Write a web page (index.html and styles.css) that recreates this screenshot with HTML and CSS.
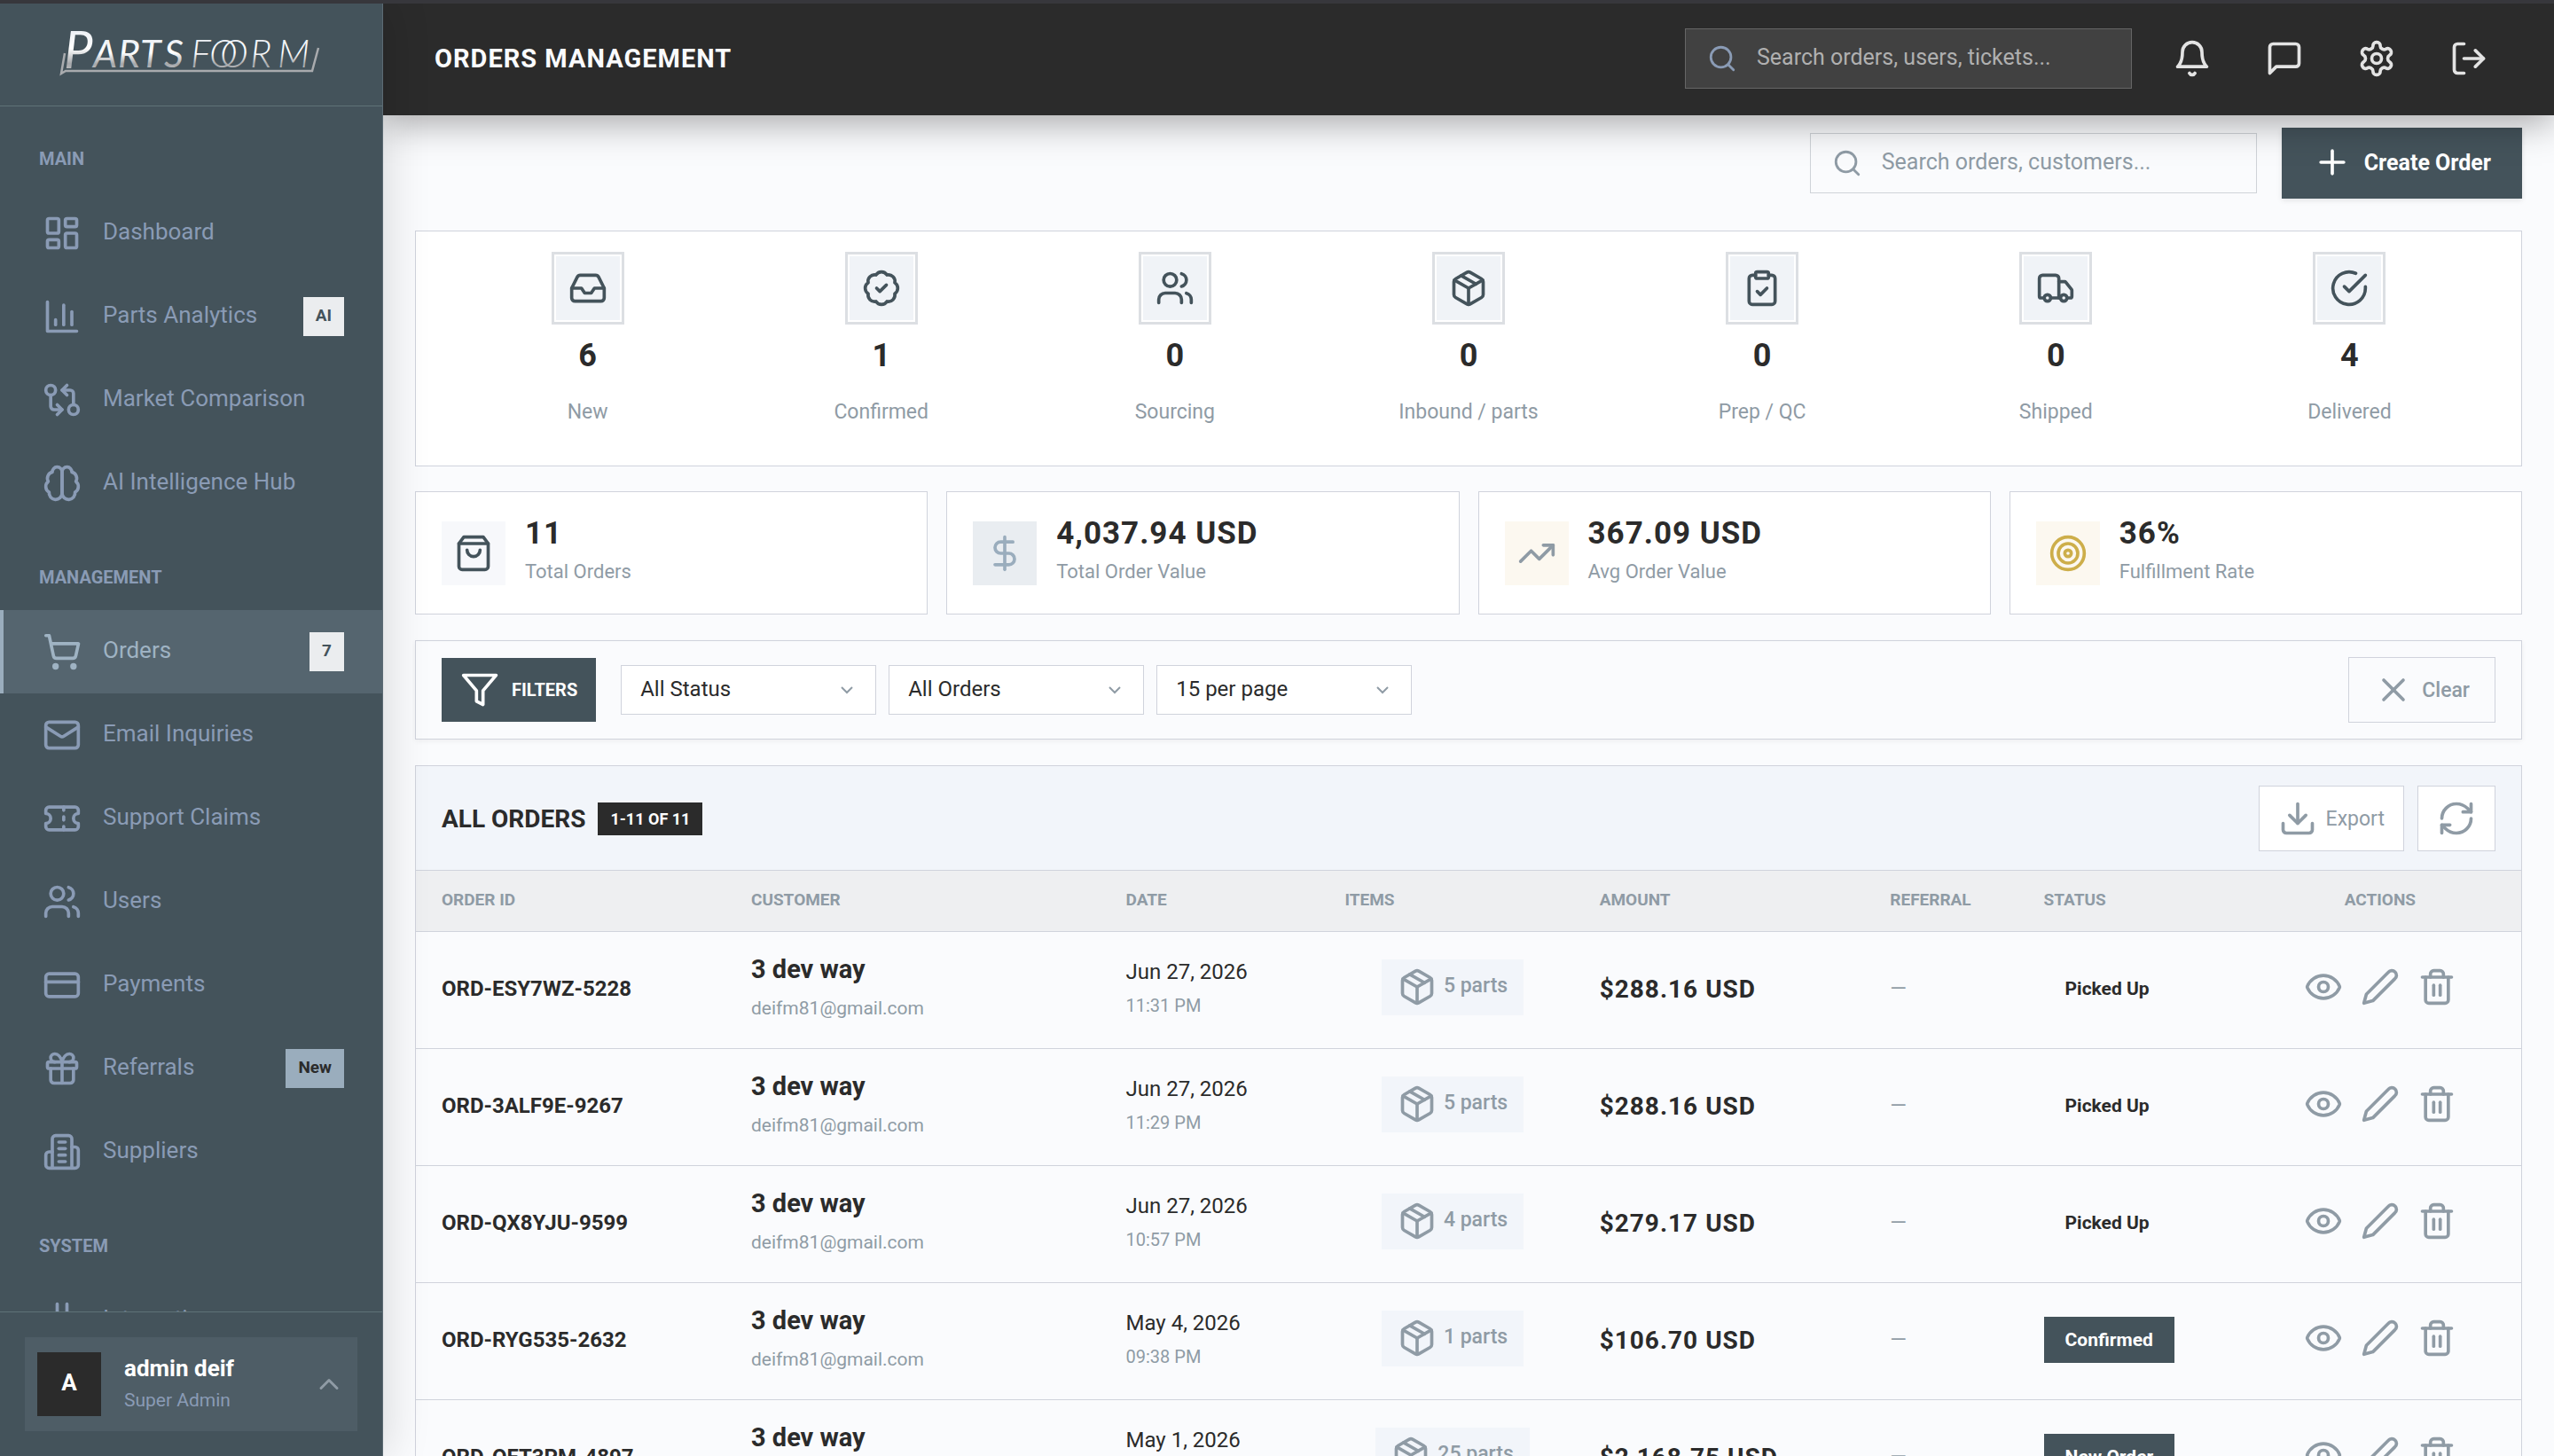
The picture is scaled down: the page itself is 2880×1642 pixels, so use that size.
FILE: index.html
```html
<!DOCTYPE html>
<html lang="en">
<head>
  <meta charset="UTF-8">
  <meta name="viewport" content="width=device-width, initial-scale=1.0">
  <title>Orders Management - PartsForm Admin</title>
  <link rel="stylesheet" href="styles.css">
</head>
<body>

  <!-- Icon sprite -->
  <svg class="sprite" aria-hidden="true">
    <symbol id="i-dashboard" viewBox="0 0 24 24"><rect x="3" y="3" width="7" height="9" rx="1"/><rect x="14" y="3" width="7" height="5" rx="1"/><rect x="14" y="12" width="7" height="9" rx="1"/><rect x="3" y="16" width="7" height="5" rx="1"/></symbol>
    <symbol id="i-chart" viewBox="0 0 24 24"><path d="M3 3v18h18"/><path d="M18 17V9"/><path d="M13 17V5"/><path d="M8 17v-3"/></symbol>
    <symbol id="i-compare" viewBox="0 0 24 24"><circle cx="5" cy="6" r="3"/><path d="M12 6h5a2 2 0 0 1 2 2v7"/><path d="m15 9-3-3 3-3"/><circle cx="19" cy="18" r="3"/><path d="M12 18H7a2 2 0 0 1-2-2V9"/><path d="m9 15 3 3-3 3"/></symbol>
    <symbol id="i-brain" viewBox="0 0 24 24"><path d="M12 5a3 3 0 1 0-5.997.125 4 4 0 0 0-2.526 5.77 4 4 0 0 0 .556 6.588A4 4 0 1 0 12 18Z"/><path d="M12 5a3 3 0 1 1 5.997.125 4 4 0 0 1 2.526 5.77 4 4 0 0 1-.556 6.588A4 4 0 1 1 12 18Z"/></symbol>
    <symbol id="i-cart" viewBox="0 0 24 24"><circle cx="8" cy="21" r="1"/><circle cx="19" cy="21" r="1"/><path d="M2.05 2.05h2l2.66 12.42a2 2 0 0 0 2 1.58h9.78a2 2 0 0 0 1.95-1.57l1.65-7.43H5.12"/></symbol>
    <symbol id="i-mail" viewBox="0 0 24 24"><rect x="2" y="4" width="20" height="16" rx="2"/><path d="m22 7-8.97 5.7a1.94 1.94 0 0 1-2.06 0L2 7"/></symbol>
    <symbol id="i-ticket" viewBox="0 0 24 24"><path d="M2 9a3 3 0 0 1 0 6v2a2 2 0 0 0 2 2h16a2 2 0 0 0 2-2v-2a3 3 0 0 1 0-6V7a2 2 0 0 0-2-2H4a2 2 0 0 0-2 2Z"/><path d="M13 5v2"/><path d="M13 17v2"/><path d="M13 11v2"/></symbol>
    <symbol id="i-users" viewBox="0 0 24 24"><path d="M16 21v-2a4 4 0 0 0-4-4H6a4 4 0 0 0-4 4v2"/><circle cx="9" cy="7" r="4"/><path d="M22 21v-2a4 4 0 0 0-3-3.87"/><path d="M16 3.13a4 4 0 0 1 0 7.75"/></symbol>
    <symbol id="i-card" viewBox="0 0 24 24"><rect x="2" y="5" width="20" height="14" rx="2"/><path d="M2 10h20"/></symbol>
    <symbol id="i-gift" viewBox="0 0 24 24"><rect x="3" y="8" width="18" height="4" rx="1"/><path d="M12 8v13"/><path d="M19 12v7a2 2 0 0 1-2 2H7a2 2 0 0 1-2-2v-7"/><path d="M7.5 8a2.5 2.5 0 0 1 0-5A4.8 8 0 0 1 12 8a4.8 8 0 0 1 4.5-5 2.5 2.5 0 0 1 0 5"/></symbol>
    <symbol id="i-building" viewBox="0 0 24 24"><path d="M6 22V4a2 2 0 0 1 2-2h8a2 2 0 0 1 2 2v18Z"/><path d="M6 12H4a2 2 0 0 0-2 2v6a2 2 0 0 0 2 2h2"/><path d="M18 9h2a2 2 0 0 1 2 2v9a2 2 0 0 1-2 2h-2"/><path d="M10 6h4"/><path d="M10 10h4"/><path d="M10 14h4"/><path d="M10 18h4"/></symbol>
    <symbol id="i-plug" viewBox="0 0 24 24"><path d="M12 22v-5"/><path d="M9 8V2"/><path d="M15 8V2"/><path d="M18 8v5a4 4 0 0 1-4 4h-4a4 4 0 0 1-4-4V8Z"/></symbol>
    <symbol id="i-up" viewBox="0 0 24 24"><path d="m18 15-6-6-6 6"/></symbol>
    <symbol id="i-search" viewBox="0 0 24 24"><circle cx="11" cy="11" r="8"/><path d="m21 21-4.3-4.3"/></symbol>
    <symbol id="i-bell" viewBox="0 0 24 24"><path d="M6 8a6 6 0 0 1 12 0c0 7 3 9 3 9H3s3-2 3-9"/><path d="M10.3 21a1.94 1.94 0 0 0 3.4 0"/></symbol>
    <symbol id="i-message" viewBox="0 0 24 24"><path d="M21 15a2 2 0 0 1-2 2H7l-4 4V5a2 2 0 0 1 2-2h14a2 2 0 0 1 2 2z"/></symbol>
    <symbol id="i-settings" viewBox="0 0 24 24"><path d="M12.22 2h-.44a2 2 0 0 0-2 2v.18a2 2 0 0 1-1 1.73l-.43.25a2 2 0 0 1-2 0l-.15-.08a2 2 0 0 0-2.73.73l-.22.38a2 2 0 0 0 .73 2.73l.15.1a2 2 0 0 1 1 1.72v.51a2 2 0 0 1-1 1.74l-.15.09a2 2 0 0 0-.73 2.73l.22.38a2 2 0 0 0 2.73.73l.15-.08a2 2 0 0 1 2 0l.43.25a2 2 0 0 1 1 1.73V20a2 2 0 0 0 2 2h.44a2 2 0 0 0 2-2v-.18a2 2 0 0 1 1-1.73l.43-.25a2 2 0 0 1 2 0l.15.08a2 2 0 0 0 2.73-.73l.22-.39a2 2 0 0 0-.73-2.73l-.15-.08a2 2 0 0 1-1-1.74v-.5a2 2 0 0 1 1-1.74l.15-.09a2 2 0 0 0 .73-2.73l-.22-.38a2 2 0 0 0-2.73-.73l-.15.08a2 2 0 0 1-2 0l-.43-.25a2 2 0 0 1-1-1.73V4a2 2 0 0 0-2-2z"/><circle cx="12" cy="12" r="3"/></symbol>
    <symbol id="i-logout" viewBox="0 0 24 24"><path d="M9 21H5a2 2 0 0 1-2-2V5a2 2 0 0 1 2-2h4"/><path d="m16 17 5-5-5-5"/><path d="M21 12H9"/></symbol>
    <symbol id="i-plus" viewBox="0 0 24 24"><path d="M5 12h14"/><path d="M12 5v14"/></symbol>
    <symbol id="i-inbox" viewBox="0 0 24 24"><path d="M22 12h-6l-2 3h-4l-2-3H2"/><path d="M5.45 5.11 2 12v6a2 2 0 0 0 2 2h16a2 2 0 0 0 2-2v-6l-3.45-6.89A2 2 0 0 0 16.76 4H7.24a2 2 0 0 0-1.79 1.11z"/></symbol>
    <symbol id="i-badge" viewBox="0 0 24 24"><path d="M3.85 8.62a4 4 0 0 1 4.78-4.77 4 4 0 0 1 6.74 0 4 4 0 0 1 4.78 4.78 4 4 0 0 1 0 6.74 4 4 0 0 1-4.77 4.78 4 4 0 0 1-6.75 0 4 4 0 0 1-4.78-4.77 4 4 0 0 1 0-6.76Z"/><path d="m9 12 2 2 4-4"/></symbol>
    <symbol id="i-package" viewBox="0 0 24 24"><path d="m7.5 4.27 9 5.15"/><path d="M21 8a2 2 0 0 0-1-1.73l-7-4a2 2 0 0 0-2 0l-7 4A2 2 0 0 0 3 8v8a2 2 0 0 0 1 1.73l7 4a2 2 0 0 0 2 0l7-4A2 2 0 0 0 21 16Z"/><path d="m3.3 7 8.7 5 8.7-5"/><path d="M12 22V12"/></symbol>
    <symbol id="i-clipboard" viewBox="0 0 24 24"><rect x="8" y="2" width="8" height="4" rx="1"/><path d="M16 4h2a2 2 0 0 1 2 2v14a2 2 0 0 1-2 2H6a2 2 0 0 1-2-2V6a2 2 0 0 1 2-2h2"/><path d="m9 14 2 2 4-4"/></symbol>
    <symbol id="i-truck" viewBox="0 0 24 24"><path d="M14 18V6a2 2 0 0 0-2-2H4a2 2 0 0 0-2 2v11a1 1 0 0 0 1 1h2"/><path d="M15 18H9"/><path d="M19 18h2a1 1 0 0 0 1-1v-3.65a1 1 0 0 0-.22-.62l-3.48-4.35A1 1 0 0 0 17.52 8H14"/><circle cx="17" cy="18" r="2"/><circle cx="7" cy="18" r="2"/></symbol>
    <symbol id="i-check" viewBox="0 0 24 24"><path d="M22 11.08V12a10 10 0 1 1-5.93-9.14"/><path d="m9 11 3 3L22 4"/></symbol>
    <symbol id="i-bag" viewBox="0 0 24 24"><path d="M6 2 3 6v14a2 2 0 0 0 2 2h14a2 2 0 0 0 2-2V6l-3-4Z"/><path d="M3 6h18"/><path d="M16 10a4 4 0 0 1-8 0"/></symbol>
    <symbol id="i-dollar" viewBox="0 0 24 24"><path d="M12 2v20"/><path d="M17 5H9.5a3.5 3.5 0 0 0 0 7h5a3.5 3.5 0 0 1 0 7H6"/></symbol>
    <symbol id="i-trend" viewBox="0 0 24 24"><path d="m22 7-8.5 8.5-5-5L2 17"/><path d="M16 7h6v6"/></symbol>
    <symbol id="i-target" viewBox="0 0 24 24"><circle cx="12" cy="12" r="10"/><circle cx="12" cy="12" r="6"/><circle cx="12" cy="12" r="2"/></symbol>
    <symbol id="i-filter" viewBox="0 0 24 24"><path d="M22 3H2l8 9.46V19l4 2v-8.54L22 3z"/></symbol>
    <symbol id="i-x" viewBox="0 0 24 24"><path d="M18 6 6 18"/><path d="m6 6 12 12"/></symbol>
    <symbol id="i-download" viewBox="0 0 24 24"><path d="M21 15v4a2 2 0 0 1-2 2H5a2 2 0 0 1-2-2v-4"/><path d="m7 10 5 5 5-5"/><path d="M12 15V3"/></symbol>
    <symbol id="i-refresh" viewBox="0 0 24 24"><path d="M3 12a9 9 0 0 1 9-9 9.75 9.75 0 0 1 6.74 2.74L21 8"/><path d="M21 3v5h-5"/><path d="M21 12a9 9 0 0 1-9 9 9.75 9.75 0 0 1-6.74-2.74L3 16"/><path d="M8 16H3v5"/></symbol>
    <symbol id="i-eye" viewBox="0 0 24 24"><path d="M2.06 12.35a1 1 0 0 1 0-.7 10.75 10.75 0 0 1 19.88 0 1 1 0 0 1 0 .7 10.75 10.75 0 0 1-19.88 0"/><circle cx="12" cy="12" r="3"/></symbol>
    <symbol id="i-pencil" viewBox="0 0 24 24"><path d="M17 3a2.85 2.83 0 1 1 4 4L7.5 20.5 2 22l1.5-5.5Z"/></symbol>
    <symbol id="i-trash" viewBox="0 0 24 24"><path d="M3 6h18"/><path d="M19 6v14a2 2 0 0 1-2 2H7a2 2 0 0 1-2-2V6"/><path d="M8 6V4a2 2 0 0 1 2-2h4a2 2 0 0 1 2 2v2"/><path d="M10 11v6"/><path d="M14 11v6"/></symbol>
  </svg>

  <aside class="sidebar">
    <div class="sidebar-header">
      <svg class="logo" viewBox="0 0 300 60" role="img" aria-label="PartsForm">
        <defs>
          <linearGradient id="chrome" x1="0" y1="0" x2="0" y2="1">
            <stop offset="0" stop-color="#dfe6ee"/>
            <stop offset="0.5" stop-color="#ffffff"/>
            <stop offset="0.75" stop-color="#a5a7aa"/>
            <stop offset="1" stop-color="#d8d8d8"/>
          </linearGradient>
        </defs>
        <g class="logo-text" fill="url(#chrome)">
          <text class="logo-cap" x="6" y="47">P</text>
          <text x="39 67 92 119" y="46">ARTS</text>
          <text class="logo-thin" x="149 170 182" y="46">FOO</text>
          <text class="logo-thin" x="216 247" y="46">RM</text>
        </g>
        <path d="M7 30 3 53 8 50H286L293 24" fill="none" stroke="#a9abae" stroke-width="2.5"/>
      </svg>
    </div>

    <nav class="sidebar-nav">
      <h2 class="nav-title">Main</h2>
      <a href="#" class="nav-item"><svg class="icon"><use href="#i-dashboard"/></svg><span class="nav-label">Dashboard</span></a>
      <a href="#" class="nav-item"><svg class="icon"><use href="#i-chart"/></svg><span class="nav-label">Parts Analytics</span><span class="nav-badge">AI</span></a>
      <a href="#" class="nav-item"><svg class="icon"><use href="#i-compare"/></svg><span class="nav-label">Market Comparison</span></a>
      <a href="#" class="nav-item"><svg class="icon"><use href="#i-brain"/></svg><span class="nav-label">AI Intelligence Hub</span></a>

      <h2 class="nav-title">Management</h2>
      <a href="#" class="nav-item active"><svg class="icon"><use href="#i-cart"/></svg><span class="nav-label">Orders</span><span class="nav-badge">7</span></a>
      <a href="#" class="nav-item"><svg class="icon"><use href="#i-mail"/></svg><span class="nav-label">Email Inquiries</span></a>
      <a href="#" class="nav-item"><svg class="icon"><use href="#i-ticket"/></svg><span class="nav-label">Support Claims</span></a>
      <a href="#" class="nav-item"><svg class="icon"><use href="#i-users"/></svg><span class="nav-label">Users</span></a>
      <a href="#" class="nav-item"><svg class="icon"><use href="#i-card"/></svg><span class="nav-label">Payments</span></a>
      <a href="#" class="nav-item"><svg class="icon"><use href="#i-gift"/></svg><span class="nav-label">Referrals</span><span class="nav-badge new">New</span></a>
      <a href="#" class="nav-item"><svg class="icon"><use href="#i-building"/></svg><span class="nav-label">Suppliers</span></a>

      <h2 class="nav-title">System</h2>
      <a href="#" class="nav-item"><svg class="icon"><use href="#i-plug"/></svg><span class="nav-label">Integrations</span></a>
    </nav>

    <div class="sidebar-footer">
      <button class="user-card" type="button">
        <span class="avatar">A</span>
        <span class="user-info">
          <span class="user-name">admin deif</span>
          <span class="user-role">Super Admin</span>
        </span>
        <svg class="icon user-arrow"><use href="#i-up"/></svg>
      </button>
    </div>
  </aside>

  <div class="main">
    <header class="header">
      <h1>Orders Management</h1>
      <div class="header-actions">
        <label class="search header-search">
          <svg class="icon"><use href="#i-search"/></svg>
          <input type="text" placeholder="Search orders, users, tickets..." aria-label="Search orders, users, tickets">
        </label>
        <button class="header-btn" aria-label="Notifications"><svg class="icon"><use href="#i-bell"/></svg></button>
        <button class="header-btn" aria-label="Messages"><svg class="icon"><use href="#i-message"/></svg></button>
        <button class="header-btn" aria-label="Settings"><svg class="icon"><use href="#i-settings"/></svg></button>
        <button class="header-btn" aria-label="Log out"><svg class="icon"><use href="#i-logout"/></svg></button>
      </div>
    </header>

    <main class="content">
      <div class="toolbar">
        <label class="search">
          <svg class="icon"><use href="#i-search"/></svg>
          <input type="text" placeholder="Search orders, customers..." aria-label="Search orders, customers">
        </label>
        <button class="create-btn"><svg class="icon"><use href="#i-plus"/></svg>Create Order</button>
      </div>

      <!-- Order pipeline -->
      <section class="pipeline">
        <div class="stage"><span class="stage-icon"><svg class="icon"><use href="#i-inbox"/></svg></span><strong>6</strong><span class="stage-label">New</span></div>
        <div class="stage"><span class="stage-icon"><svg class="icon"><use href="#i-badge"/></svg></span><strong>1</strong><span class="stage-label">Confirmed</span></div>
        <div class="stage"><span class="stage-icon"><svg class="icon"><use href="#i-users"/></svg></span><strong>0</strong><span class="stage-label">Sourcing</span></div>
        <div class="stage"><span class="stage-icon"><svg class="icon"><use href="#i-package"/></svg></span><strong>0</strong><span class="stage-label">Inbound / parts</span></div>
        <div class="stage"><span class="stage-icon"><svg class="icon"><use href="#i-clipboard"/></svg></span><strong>0</strong><span class="stage-label">Prep / QC</span></div>
        <div class="stage"><span class="stage-icon"><svg class="icon"><use href="#i-truck"/></svg></span><strong>0</strong><span class="stage-label">Shipped</span></div>
        <div class="stage"><span class="stage-icon"><svg class="icon"><use href="#i-check"/></svg></span><strong>4</strong><span class="stage-label">Delivered</span></div>
      </section>

      <!-- Stats -->
      <section class="stats">
        <div class="stat">
          <span class="stat-icon total"><svg class="icon"><use href="#i-bag"/></svg></span>
          <div><div class="stat-value">11</div><div class="stat-label">Total Orders</div></div>
        </div>
        <div class="stat">
          <span class="stat-icon value"><svg class="icon"><use href="#i-dollar"/></svg></span>
          <div><div class="stat-value">4,037.94 USD</div><div class="stat-label">Total Order Value</div></div>
        </div>
        <div class="stat">
          <span class="stat-icon avg"><svg class="icon"><use href="#i-trend"/></svg></span>
          <div><div class="stat-value">367.09 USD</div><div class="stat-label">Avg Order Value</div></div>
        </div>
        <div class="stat">
          <span class="stat-icon rate"><svg class="icon"><use href="#i-target"/></svg></span>
          <div><div class="stat-value">36%</div><div class="stat-label">Fulfillment Rate</div></div>
        </div>
      </section>

      <!-- Filters -->
      <section class="filters">
        <button class="filter-btn"><svg class="icon"><use href="#i-filter"/></svg>Filters</button>
        <div class="selects">
          <select aria-label="Status"><option>All Status</option></select>
          <select aria-label="Orders"><option>All Orders</option></select>
          <select aria-label="Page size"><option>15 per page</option></select>
        </div>
        <button class="clear-btn"><svg class="icon"><use href="#i-x"/></svg>Clear</button>
      </section>

      <!-- Orders table -->
      <section class="orders">
        <div class="orders-header">
          <h2>All Orders</h2>
          <span class="count-badge">1-11 of 11</span>
          <div class="orders-actions">
            <button class="tool-btn"><svg class="icon"><use href="#i-download"/></svg>Export</button>
            <button class="tool-btn" aria-label="Refresh"><svg class="icon"><use href="#i-refresh"/></svg></button>
          </div>
        </div>
        <table>
          <colgroup>
            <col class="c-id"><col class="c-customer"><col class="c-date"><col class="c-items"><col class="c-amount"><col class="c-referral"><col class="c-status"><col class="c-actions">
          </colgroup>
          <thead>
            <tr><th>Order ID</th><th>Customer</th><th>Date</th><th>Items</th><th>Amount</th><th>Referral</th><th>Status</th><th class="center">Actions</th></tr>
          </thead>
          <tbody>
            <tr>
              <td class="order-id">ORD-ESY7WZ-5228</td>
              <td><div class="name">3 dev way</div><div class="email">deifm81@gmail.com</div></td>
              <td><div class="date">Jun 27, 2026</div><div class="time">11:31 PM</div></td>
              <td class="items"><span class="parts"><svg class="icon"><use href="#i-package"/></svg><span>5 parts</span></span></td>
              <td class="amount">$288.16 USD</td>
              <td class="referral">—</td>
              <td><span class="status">Picked Up</span></td>
              <td class="actions"><button aria-label="View"><svg class="icon"><use href="#i-eye"/></svg></button><button aria-label="Edit"><svg class="icon"><use href="#i-pencil"/></svg></button><button aria-label="Delete"><svg class="icon"><use href="#i-trash"/></svg></button></td>
            </tr>
            <tr>
              <td class="order-id">ORD-3ALF9E-9267</td>
              <td><div class="name">3 dev way</div><div class="email">deifm81@gmail.com</div></td>
              <td><div class="date">Jun 27, 2026</div><div class="time">11:29 PM</div></td>
              <td class="items"><span class="parts"><svg class="icon"><use href="#i-package"/></svg><span>5 parts</span></span></td>
              <td class="amount">$288.16 USD</td>
              <td class="referral">—</td>
              <td><span class="status">Picked Up</span></td>
              <td class="actions"><button aria-label="View"><svg class="icon"><use href="#i-eye"/></svg></button><button aria-label="Edit"><svg class="icon"><use href="#i-pencil"/></svg></button><button aria-label="Delete"><svg class="icon"><use href="#i-trash"/></svg></button></td>
            </tr>
            <tr>
              <td class="order-id">ORD-QX8YJU-9599</td>
              <td><div class="name">3 dev way</div><div class="email">deifm81@gmail.com</div></td>
              <td><div class="date">Jun 27, 2026</div><div class="time">10:57 PM</div></td>
              <td class="items"><span class="parts"><svg class="icon"><use href="#i-package"/></svg><span>4 parts</span></span></td>
              <td class="amount">$279.17 USD</td>
              <td class="referral">—</td>
              <td><span class="status">Picked Up</span></td>
              <td class="actions"><button aria-label="View"><svg class="icon"><use href="#i-eye"/></svg></button><button aria-label="Edit"><svg class="icon"><use href="#i-pencil"/></svg></button><button aria-label="Delete"><svg class="icon"><use href="#i-trash"/></svg></button></td>
            </tr>
            <tr>
              <td class="order-id">ORD-RYG535-2632</td>
              <td><div class="name">3 dev way</div><div class="email">deifm81@gmail.com</div></td>
              <td><div class="date">May 4, 2026</div><div class="time">09:38 PM</div></td>
              <td class="items"><span class="parts"><svg class="icon"><use href="#i-package"/></svg><span>1 parts</span></span></td>
              <td class="amount">$106.70 USD</td>
              <td class="referral">—</td>
              <td><span class="status filled">Confirmed</span></td>
              <td class="actions"><button aria-label="View"><svg class="icon"><use href="#i-eye"/></svg></button><button aria-label="Edit"><svg class="icon"><use href="#i-pencil"/></svg></button><button aria-label="Delete"><svg class="icon"><use href="#i-trash"/></svg></button></td>
            </tr>
            <tr>
              <td class="order-id">ORD-QFT3PM-4897</td>
              <td><div class="name">3 dev way</div><div class="email">deifm81@gmail.com</div></td>
              <td><div class="date">May 1, 2026</div><div class="time">08:12 PM</div></td>
              <td class="items"><span class="parts"><svg class="icon"><use href="#i-package"/></svg><span>25 parts</span></span></td>
              <td class="amount">$2,168.75 USD</td>
              <td class="referral">—</td>
              <td><span class="status filled">New Order</span></td>
              <td class="actions"><button aria-label="View"><svg class="icon"><use href="#i-eye"/></svg></button><button aria-label="Edit"><svg class="icon"><use href="#i-pencil"/></svg></button><button aria-label="Delete"><svg class="icon"><use href="#i-trash"/></svg></button></td>
            </tr>
          </tbody>
        </table>
      </section>
    </main>
  </div>

</body>
</html>
```
FILE: styles.css
```css
:root {
  --slate: #44535b;
  --dark: #2b2b2b;
  --blue: #9aadbd;
  --nav: #8a9bb5;
  --muted: #8f9ba5;
  --line: #d0d3dc;
  --bg: #fafbfd;
}

* {
  box-sizing: border-box;
}

body {
  margin: 0;
  height: 100vh;
  display: flex;
  overflow: hidden;
  border-top: 4px solid #37373c;
  background: var(--bg);
  color: var(--dark);
  font-family: Roboto, "Liberation Sans", sans-serif;
  font-size: 26px;
}

button, input, select {
  font-family: inherit;
  color: inherit;
  margin: 0;
  border-radius: 0;
}

button {
  border: none;
  background: none;
  padding: 0;
  cursor: pointer;
}

h1, h2 {
  margin: 0;
}

.sprite {
  display: none;
}

.icon {
  width: 44px;
  height: 44px;
  flex-shrink: 0;
  display: block;
  fill: none;
  stroke: currentColor;
  stroke-width: 2;
  stroke-linecap: round;
  stroke-linejoin: round;
}

/* Sidebar */
.sidebar {
  width: 432px;
  flex-shrink: 0;
  display: flex;
  flex-direction: column;
  background: var(--slate);
  border-right: 1px solid #5c6b74;
  box-shadow: 4px 0 48px rgba(0, 0, 0, 0.14);
  position: relative;
  z-index: 3;
}

.sidebar-header {
  height: 116px;
  flex-shrink: 0;
  display: flex;
  justify-content: center;
  padding-top: 26px;
  border-bottom: 1px solid #5f7377;
}

.logo {
  width: 300px;
  height: 60px;
  overflow: visible;
}

.logo-text {
  font-family: Lato, "Open Sans", sans-serif;
  font-style: italic;
  font-size: 43px;
}

.logo-cap {
  font-size: 58px;
}

.logo-thin {
  font-weight: 300;
}

.sidebar-nav {
  flex: 1;
  min-height: 0;
  overflow: hidden;
}

.nav-title {
  height: 96px;
  padding: 45px 44px 0;
  font-size: 20px;
  line-height: 28px;
  font-weight: 700;
  text-transform: uppercase;
  color: var(--nav);
}

.nav-item {
  height: 94px;
  display: flex;
  align-items: center;
  gap: 24px;
  padding: 0 43px 0 44px;
  border-left: 4px solid transparent;
  color: var(--nav);
  text-decoration: none;
}

.nav-item.active {
  background: #55656f;
  border-left-color: var(--blue);
  color: #9fb3c3;
}

.nav-label {
  flex: 1;
  padding-bottom: 4px;
}

.nav-badge {
  height: 44px;
  padding: 0 14px;
  font-size: 19px;
  font-weight: 700;
  line-height: 42px;
  background: #ebedef;
  color: var(--slate);
}

.nav-badge.new {
  background: var(--blue);
  color: var(--dark);
}

.sidebar-footer {
  padding: 28px;
  border-top: 1px solid #5f7377;
}

.user-card {
  width: 100%;
  height: 106px;
  display: flex;
  align-items: center;
  gap: 26px;
  padding: 0 14px;
  background: #4e5d66;
  text-align: left;
}

.avatar {
  width: 72px;
  height: 72px;
  font-size: 26px;
  font-weight: 700;
  line-height: 68px;
  text-align: center;
  background: var(--dark);
  color: #fff;
}

.user-info {
  flex: 1;
}

.user-name, .user-role {
  display: block;
  line-height: 36px;
}

.user-name {
  font-size: 26px;
  font-weight: 700;
  color: #fff;
}

.user-role {
  font-size: 21px;
  color: var(--nav);
}

.user-arrow {
  width: 36px;
  height: 36px;
  color: var(--muted);
}

/* Header */
.main {
  flex: 1;
  min-width: 0;
}

.header {
  height: 126px;
  display: flex;
  align-items: center;
  justify-content: space-between;
  padding: 0 52px 2px 58px;
  background: var(--dark);
  box-shadow: 0 8px 40px rgba(0, 0, 0, 0.35);
  position: relative;
  z-index: 2;
}

.header h1 {
  font-size: 29px;
  font-weight: 700;
  letter-spacing: 1px;
  text-transform: uppercase;
  color: #fafbfd;
}

.header-actions {
  display: flex;
  align-items: center;
  gap: 16px;
}

.search {
  width: 504px;
  height: 68px;
  display: flex;
  align-items: center;
  gap: 22px;
  padding: 0 24px;
  border: 1px solid #cfd3d8;
  color: var(--muted);
}

.search .icon {
  width: 34px;
  height: 34px;
}

.search input {
  flex: 1;
  min-width: 0;
  padding: 0 0 4px;
  border: none;
  outline: none;
  background: none;
  font-size: 25px;
}

.search input::placeholder {
  color: inherit;
  opacity: 1;
}

.header-search {
  margin-right: 8px;
  background: #414141;
  border-color: #666;
  color: var(--nav);
}

.header-search input {
  color: #b0b0b0;
}

.header-btn {
  width: 88px;
  height: 88px;
  display: flex;
  align-items: center;
  justify-content: center;
  color: #e3e3e3;
}

/* Content */
.content {
  padding: 14px 36px 36px;
}

.toolbar {
  display: flex;
  align-items: center;
  justify-content: flex-end;
  gap: 28px;
  margin-bottom: 36px;
}

.create-btn {
  height: 80px;
  display: flex;
  align-items: center;
  gap: 14px;
  padding: 0 35px 2px;
  font-size: 25px;
  font-weight: 700;
  background: var(--slate);
  color: #fff;
  box-shadow: 0 2px 6px rgba(0, 0, 0, 0.1);
}

.pipeline {
  display: grid;
  grid-template-columns: repeat(7, 1fr);
  padding: 28px 28px 44px;
  margin-bottom: 28px;
  background: #fff;
  border: 1px solid var(--line);
}

.stage {
  display: flex;
  flex-direction: column;
  align-items: center;
}

.stage-icon {
  width: 72px;
  height: 72px;
  display: flex;
  align-items: center;
  justify-content: center;
  background: #f0f3f7;
  color: var(--slate);
  box-shadow: 0 0 0 2px #fff, 0 0 0 5px #dcdfe3;
}

.stage strong {
  margin-top: 18px;
  font-size: 36px;
  line-height: 44px;
}

.stage-label {
  margin-top: 26px;
  font-size: 23px;
  line-height: 32px;
  color: var(--muted);
}

.stats {
  display: grid;
  grid-template-columns: repeat(4, 1fr);
  gap: 21px;
  margin-bottom: 29px;
}

.stat {
  height: 139px;
  display: flex;
  align-items: center;
  gap: 22px;
  padding: 0 29px;
  background: #fff;
  border: 1px solid var(--line);
}

.stat-icon {
  width: 72px;
  height: 72px;
  display: flex;
  align-items: center;
  justify-content: center;
}

.stat-icon.total {
  background: #f7f8fb;
  color: var(--slate);
}

.stat-icon.value {
  background: #e9edf1;
  color: var(--blue);
}

.stat-icon.avg {
  background: #fcf8f0;
  color: var(--muted);
}

.stat-icon.rate {
  background: #fcf8f0;
  color: #cdae4a;
}

.stat-value {
  margin-bottom: 2px;
  font-size: 35px;
  font-weight: 700;
  letter-spacing: 1px;
  line-height: 40px;
}

.stat-label {
  font-size: 22px;
  line-height: 42px;
  color: var(--muted);
}

/* Filters */
.filters {
  height: 112px;
  display: flex;
  align-items: center;
  gap: 28px;
  padding: 0 29px;
  margin-bottom: 29px;
  border: 1px solid var(--line);
  box-shadow: 0 2px 6px rgba(0, 0, 0, 0.05);
}

.filter-btn {
  height: 72px;
  display: flex;
  align-items: center;
  gap: 14px;
  padding: 0 21px;
  font-size: 20px;
  font-weight: 700;
  text-transform: uppercase;
  background: var(--slate);
  color: #fff;
}

.selects {
  display: flex;
  gap: 14px;
  margin-right: auto;
}

.selects select {
  width: 288px;
  height: 56px;
  padding: 0 21px 2px;
  font-size: 24px;
  appearance: none;
  border: 1px solid var(--line);
  background: #fff url("data:image/svg+xml,%3Csvg xmlns='http://www.w3.org/2000/svg' width='16' height='10' fill='none' stroke='%238f9ba5' stroke-width='2'%3E%3Cpath d='M2 2l6 6 6-6'/%3E%3C/svg%3E") no-repeat right 24px center;
}

.clear-btn {
  height: 74px;
  display: flex;
  align-items: center;
  gap: 10px;
  padding: 0 28px;
  font-size: 23px;
  font-weight: 500;
  color: var(--muted);
  border: 1px solid var(--line);
}

/* Orders table */
.orders {
  border: 1px solid var(--line);
}

.orders-header {
  display: flex;
  align-items: center;
  gap: 14px;
  padding: 22px 29px 21px;
  background: #f2f5fa;
  border-bottom: 1px solid var(--line);
}

.orders-header h2 {
  font-size: 28px;
  font-weight: 700;
  text-transform: uppercase;
}

.count-badge {
  padding: 0 14px;
  font-size: 18px;
  font-weight: 700;
  line-height: 37px;
  text-transform: uppercase;
  background: var(--dark);
  color: #fff;
}

.orders-actions {
  display: flex;
  gap: 15px;
  margin-left: auto;
}

.tool-btn {
  height: 74px;
  display: flex;
  align-items: center;
  gap: 10px;
  padding: 0 21px;
  font-size: 23px;
  color: var(--muted);
  background: #fff;
  border: 1px solid var(--line);
}

table {
  width: 100%;
  table-layout: fixed;
  border-collapse: collapse;
}

.c-id { width: 14.7%; }
.c-customer { width: 17.8%; }
.c-date { width: 10.4%; }
.c-items { width: 12.1%; }
.c-amount { width: 13.8%; }
.c-referral { width: 7.3%; }
.c-status { width: 10.5%; }
.c-actions { width: 13.4%; }

th, td {
  padding: 0 29px 2px;
  text-align: left;
  white-space: nowrap;
  border-bottom: 1px solid var(--line);
}

th {
  height: 68px;
  font-size: 19px;
  font-weight: 700;
  text-transform: uppercase;
  background: #eeeff1;
  color: var(--muted);
}

th.center {
  text-align: center;
}

td {
  height: 132px;
}

.order-id {
  font-size: 24px;
  font-weight: 700;
}

.name {
  font-size: 29px;
  font-weight: 700;
  line-height: 44px;
}

.email {
  font-size: 21px;
  line-height: 44px;
  color: var(--muted);
}

.date {
  font-size: 24px;
  line-height: 38px;
}

.time {
  font-size: 20px;
  line-height: 38px;
  color: var(--muted);
}

td.items {
  padding: 0 15px 6px 29px;
  text-align: center;
}

.parts {
  height: 63px;
  display: inline-flex;
  align-items: center;
  gap: 8px;
  padding: 0 18px;
  font-size: 23px;
  font-weight: 500;
  vertical-align: middle;
  background: #f2f5fa;
  color: var(--muted);
}

.parts span {
  padding-bottom: 4px;
}

.amount {
  font-size: 28px;
  font-weight: 700;
  letter-spacing: 1px;
}

.referral {
  font-size: 24px;
  color: var(--muted);
}

.status {
  display: inline-block;
  padding: 0 24px;
  font-size: 21px;
  font-weight: 700;
  line-height: 52px;
}

.status.filled {
  background: var(--slate);
  color: #fff;
}

td.actions {
  padding-bottom: 7px;
  text-align: center;
}

.actions button {
  display: inline-block;
  vertical-align: middle;
  margin: 0 10px;
  color: var(--muted);
}
```
